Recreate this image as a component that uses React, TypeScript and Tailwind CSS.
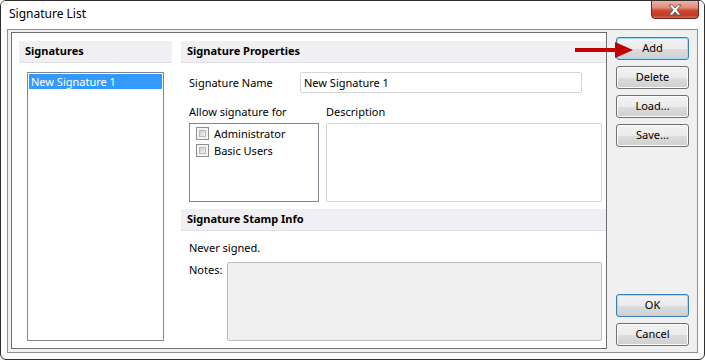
import React from "react";

const font = { fontFamily: '"Noto Sans", "Open Sans", sans-serif' };

function WinButton({ label, focused }: { label: string; focused?: boolean }) {
  return (
    <div
      className={
        "relative h-[23px] w-[73px] rounded-[3px] border flex items-center justify-center text-[11px] text-black " +
        (focused
          ? "border-[#3c7fb1] shadow-[inset_0_0_0_1px_#9fdcf7]"
          : "border-[#707070] shadow-[inset_0_0_0_1px_#fcfcfc]")
      }
      style={{
        background: "linear-gradient(to bottom, #f2f2f2 0%, #ebebeb 50%, #dddddd 51%, #cfcfcf 100%)",
      }}
    >
      {label}
    </div>
  );
}

function Checkbox({ label }: { label: string }) {
  return (
    <div className="flex items-center h-[17px]">
      <div className="w-[13px] h-[13px] border border-[#8e8f8f] bg-[#f4f4f4] p-[2px]">
        <div className="w-full h-full bg-gradient-to-br from-[#cbcbcb] to-[#f6f6f6] border border-[#b8b8b8]" />
      </div>
      <span className="ml-[5px] text-[11px] text-black leading-[15px]">{label}</span>
    </div>
  );
}

function Header({ title }: { title: string }) {
  return (
    <div className="h-[22px] bg-[#f0f0f4] border-b border-[#e1e1e6] flex items-center px-[6px] text-[11px] font-bold text-black">
      {title}
    </div>
  );
}

export default function App() {
  return (
    <div className="w-[705px] h-[360px] bg-white" style={font}>
      <div className="relative w-[705px] h-[360px] border border-[#2e2e2e] rounded-[6px] bg-[#fbfbfb] flex flex-col overflow-hidden">
        {/* title bar */}
        <div className="h-[28px] flex items-center pl-[8px] text-[12px] text-black bg-white leading-none">
          <span className="mt-[-2px]">Signature List</span>
        </div>
        {/* close button */}
        <div
          className="absolute top-[-1px] right-[5px] w-[48px] h-[19px] rounded-b-[4px] border border-[#6b2419] flex items-center justify-center"
          style={{
            background:
              "linear-gradient(to bottom, #eab2a4 0%, #df8b76 40%, #cd4a33 55%, #c23a26 85%, #d46e5c 100%)",
          }}
        >
          <svg width="16" height="12" viewBox="0 0 16 12">
            <path
              d="M2 1 L5.5 1 L8 4 L10.5 1 L14 1 L10 6 L14 11 L10.5 11 L8 8 L5.5 11 L2 11 L6 6 Z"
              fill="#ffffff"
              stroke="#5a5a5a"
              strokeWidth="0.9"
              strokeLinejoin="round"
            />
          </svg>
        </div>

        {/* frame */}
        <div className="flex-1 mx-[6px] mb-[6px] border border-[#8f8f8f] bg-[#f0f0f0] flex pt-[2px] pl-[3px] pb-[3px]">
          {/* white panel */}
          <div className="w-[596px] border border-[#6e6e6e] bg-white flex">
            {/* left column */}
            <div className="ml-[7px] mt-[8px] w-[153px] flex flex-col">
              <Header title="Signatures" />
              <div className="mt-[9px] ml-[8px] w-[137px] h-[269px] border border-[#828790] p-[1px]">
                <div className="h-[15px] bg-[#3399ff] text-white text-[11px] leading-[15px] pl-[2px]">
                  New Signature 1
                </div>
              </div>
            </div>
            {/* right column */}
            <div className="ml-[9px] mt-[8px] w-[425px] flex flex-col text-[11px] text-black">
              <Header title="Signature Properties" />
              <div className="mt-[9px] pl-[8px] flex items-center">
                <div className="w-[111px] leading-[15px]">Signature Name</div>
                <div className="w-[282px] h-[21px] border border-[#d5d5d5] rounded-[2px] flex items-center pl-[3px] leading-[15px]">
                  New Signature 1
                </div>
              </div>
              <div className="mt-[11px] pl-[8px] flex gap-[7px] leading-[15px]">
                <div className="w-[130px]">Allow signature for</div>
                <div>Description</div>
              </div>
              <div className="mt-[4px] pl-[8px] flex gap-[7px]">
                <div className="w-[130px] h-[79px] border border-[#828790] pt-[1px] pl-[6px] flex flex-col">
                  <Checkbox label="Administrator" />
                  <Checkbox label="Basic Users" />
                </div>
                <div className="w-[276px] h-[79px] border border-[#d5d5d5] rounded-[2px]" />
              </div>
              <div className="mt-[7px]">
                <Header title="Signature Stamp Info" />
              </div>
              <div className="mt-[9px] pl-[8px] leading-[15px]">Never signed.</div>
              <div className="mt-[7px] pl-[8px] flex">
                <div className="w-[38px] leading-[15px]">Notes:</div>
                <div className="w-[375px] h-[79px] border border-[#bcbcbc] rounded-[2px] bg-[#f0f0f0]" />
              </div>
            </div>
          </div>
          {/* buttons */}
          <div className="ml-[9px] mt-[5px] mb-[3px] flex flex-col justify-between">
            <div className="flex flex-col gap-[6px]">
              <WinButton label="Add" focused />
              <WinButton label="Delete" />
              <WinButton label="Load..." />
              <WinButton label="Save..." />
            </div>
            <div className="flex flex-col gap-[6px]">
              <WinButton label="OK" focused />
              <WinButton label="Cancel" />
            </div>
          </div>
        </div>

        {/* red arrow */}
        <svg
          className="absolute left-[574px] top-[40px]"
          width="60"
          height="18"
          viewBox="0 0 60 18"
        >
          <path d="M0 7 L40 7 L40 1 L58 9 L40 17 L40 11 L0 11 Z" fill="#c00000" />
        </svg>
      </div>
    </div>
  );
}
